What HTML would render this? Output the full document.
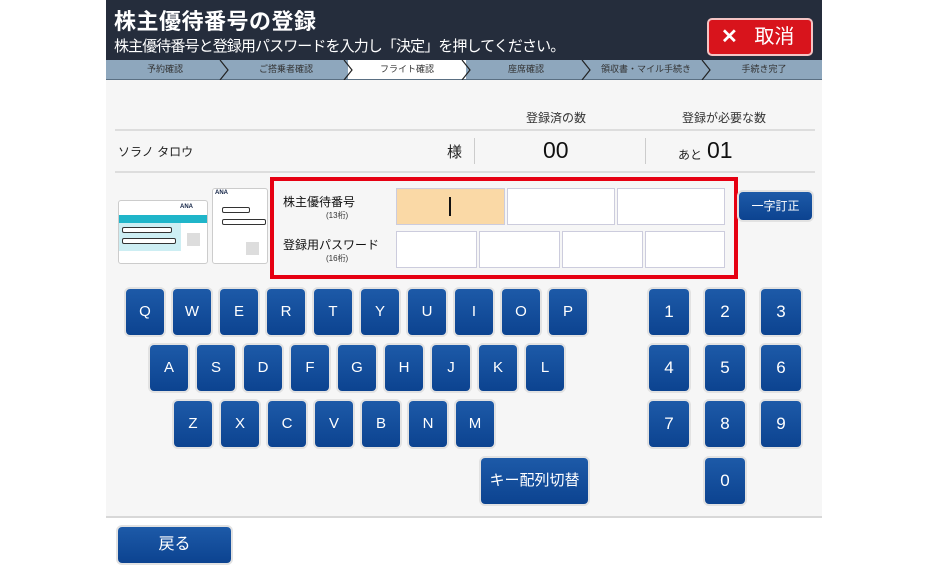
<!DOCTYPE html>
<html><head><meta charset="utf-8"><style>
*{margin:0;padding:0;box-sizing:border-box}
body{width:930px;height:575px;background:#fff;position:relative;overflow:hidden;font-family:"Liberation Sans","Noto Sans CJK JP",sans-serif}
.a{position:absolute}
#scr{left:106px;top:0;width:716px;height:575px;background:#f6f6f6}
#hdr{left:106px;top:0;width:716px;height:60px;background:#252d3c}
.t1{left:114px;top:4px;color:#fff;font-size:22px;font-weight:bold;letter-spacing:0.5px}
.t2{left:114px;top:35px;color:#fff;font-size:15px;letter-spacing:-0.9px}
#cx{left:707px;top:18px;width:106px;height:38px;background:#d8141c;border:2px solid #f4c4c4;border-radius:5px;color:#fff;font-size:20px;line-height:34px;padding-left:12px}
#prog{left:106px;top:60px;width:716px;height:20px;background:#8ea7bd;border-bottom:1px solid #5a6f82}
.st{position:absolute;top:0;height:19px;font-size:9px;color:#333;line-height:19px;text-align:center}
.k{position:absolute;width:38px;height:46px;background:linear-gradient(#1d5aa8,#0c4390);border-radius:4px;color:#fff;font-size:15px;text-align:center;line-height:46px;box-shadow:0 0 0 2px #e2e2e2}
.cell{position:absolute;height:37px;background:#fff;border:1px solid #ccd}
.ln{position:absolute;height:2px;background:#ddd;left:115px;width:700px}
</style></head><body>
<div class="a" id="scr"></div>
<div class="a" id="hdr"></div>
<div class="a t1">株主優待番号の登録</div>
<div class="a t2">株主優待番号と登録用パスワードを入力し「決定」を押してください。</div>
<div class="a" id="cx"><b style="font-size:20px">✕</b>&nbsp;&nbsp;&nbsp;取消</div>
<div class="a" id="prog">
<div class="st" style="left:0;width:118px">予約確認</div>
<div class="st" style="left:118px;width:124px">ご搭乗者確認</div>
<div class="st" style="left:242px;width:118px;background:#fff">フライト確認</div>
<div class="st" style="left:360px;width:120px">座席確認</div>
<div class="st" style="left:480px;width:120px">領収書・マイル手続き</div>
<div class="st" style="left:600px;width:116px">手続き完了</div>
<svg class="a" style="left:0;top:0" width="716" height="20"><g fill="none" stroke="#222" stroke-width="1.2"><path d="M114 0 L122 10 L114 20M238 0 L246 10 L238 20M356 0 L364 10 L356 20M476 0 L484 10 L476 20M596 0 L604 10 L596 20"/></g></svg>
</div>
<div class="a" style="left:526px;top:109px;font-size:12px;color:#333">登録済の数</div>
<div class="a" style="left:682px;top:109px;font-size:12px;color:#333">登録が必要な数</div>
<div class="ln" style="top:129px"></div>
<div class="a" style="left:118px;top:143px;font-size:12px;color:#222">ソラノ タロウ</div>
<div class="a" style="left:447px;top:141px;font-size:15px;color:#222">様</div>
<div class="a" style="left:474px;top:138px;width:1px;height:26px;background:#ccc"></div>
<div class="a" style="left:543px;top:137px;font-size:23px;color:#111">00</div>
<div class="a" style="left:645px;top:138px;width:1px;height:26px;background:#ccc"></div>
<div class="a" style="left:678px;top:146px;font-size:12px;color:#222">あと</div>
<div class="a" style="left:707px;top:137px;font-size:23px;color:#111">01</div>
<div class="ln" style="top:171px"></div>
<!-- cards -->
<div class="a" style="left:118px;top:200px;width:90px;height:64px;background:#fff;border:1px solid #ccc;border-radius:3px"></div>
<div class="a" style="left:119px;top:215px;width:88px;height:8px;background:#1fb5c9"></div>
<div class="a" style="left:119px;top:223px;width:62px;height:28px;background:#cdeef3"></div>
<div class="a" style="left:180px;top:204px;font-size:6px;font-weight:bold;color:#124">ANA</div>
<div class="a" style="left:122px;top:227px;width:50px;height:6px;border:1px solid #333;border-radius:2px;background:#fff"></div>
<div class="a" style="left:122px;top:238px;width:54px;height:6px;border:1px solid #333;border-radius:2px;background:#fff"></div>
<div class="a" style="left:187px;top:233px;width:13px;height:13px;background:#ddd"></div>
<div class="a" style="left:212px;top:188px;width:56px;height:76px;background:#fff;border:1px solid #ccc;border-radius:3px"></div>
<div class="a" style="left:215px;top:190px;font-size:6px;font-weight:bold;color:#124">ANA</div>
<div class="a" style="left:222px;top:207px;width:28px;height:6px;border:1px solid #333;border-radius:2px"></div>
<div class="a" style="left:222px;top:219px;width:44px;height:6px;border:1px solid #333;border-radius:2px"></div>
<div class="a" style="left:246px;top:242px;width:13px;height:13px;background:#ddd"></div>
<!-- red box -->
<div class="a" style="left:270px;top:177px;width:468px;height:102px;border:4px solid #e60012;background:#f6f6f6"></div>
<div class="a" style="left:283px;top:193px;font-size:12px;color:#111">株主優待番号</div>
<div class="a" style="left:326px;top:210px;font-size:8px;color:#333">(13桁)</div>
<div class="a" style="left:283px;top:236px;font-size:12px;color:#111">登録用パスワード</div>
<div class="a" style="left:326px;top:253px;font-size:8px;color:#333">(16桁)</div>
<div class="cell" style="left:396px;top:188px;width:109px;background:#fad9a6"></div>
<div class="a" style="left:449px;top:197px;width:2px;height:19px;background:#111"></div>
<div class="cell" style="left:507px;top:188px;width:108px"></div>
<div class="cell" style="left:617px;top:188px;width:108px"></div>
<div class="cell" style="left:396px;top:231px;width:81px"></div>
<div class="cell" style="left:479px;top:231px;width:81px"></div>
<div class="cell" style="left:562px;top:231px;width:81px"></div>
<div class="cell" style="left:645px;top:231px;width:80px"></div>
<div class="k" style="left:739px;top:192px;width:73px;height:28px;line-height:28px;font-size:12px">一字訂正</div>
<!-- keys -->
<div class="k" style="left:126px;top:289px">Q</div><div class="k" style="left:173px;top:289px">W</div><div class="k" style="left:220px;top:289px">E</div><div class="k" style="left:267px;top:289px">R</div><div class="k" style="left:314px;top:289px">T</div><div class="k" style="left:361px;top:289px">Y</div><div class="k" style="left:408px;top:289px">U</div><div class="k" style="left:455px;top:289px">I</div><div class="k" style="left:502px;top:289px">O</div><div class="k" style="left:549px;top:289px">P</div>
<div class="k" style="left:150px;top:345px">A</div><div class="k" style="left:197px;top:345px">S</div><div class="k" style="left:244px;top:345px">D</div><div class="k" style="left:291px;top:345px">F</div><div class="k" style="left:338px;top:345px">G</div><div class="k" style="left:385px;top:345px">H</div><div class="k" style="left:432px;top:345px">J</div><div class="k" style="left:479px;top:345px">K</div><div class="k" style="left:526px;top:345px">L</div>
<div class="k" style="left:174px;top:401px">Z</div><div class="k" style="left:221px;top:401px">X</div><div class="k" style="left:268px;top:401px">C</div><div class="k" style="left:315px;top:401px">V</div><div class="k" style="left:362px;top:401px">B</div><div class="k" style="left:409px;top:401px">N</div><div class="k" style="left:456px;top:401px">M</div>
<div class="k" style="left:481px;top:458px;width:107px;font-size:15px">キー配列切替</div>
<div class="k" style="left:649px;top:289px;width:40px;font-size:17px">1</div><div class="k" style="left:705px;top:289px;width:40px;font-size:17px">2</div><div class="k" style="left:761px;top:289px;width:40px;font-size:17px">3</div>
<div class="k" style="left:649px;top:345px;width:40px;font-size:17px">4</div><div class="k" style="left:705px;top:345px;width:40px;font-size:17px">5</div><div class="k" style="left:761px;top:345px;width:40px;font-size:17px">6</div>
<div class="k" style="left:649px;top:401px;width:40px;font-size:17px">7</div><div class="k" style="left:705px;top:401px;width:40px;font-size:17px">8</div><div class="k" style="left:761px;top:401px;width:40px;font-size:17px">9</div>
<div class="k" style="left:705px;top:458px;width:40px;font-size:17px">0</div>
<div class="a" style="left:106px;top:516px;width:716px;height:2px;background:#d8d8d8"></div>
<div class="a" style="left:106px;top:518px;width:716px;height:57px;background:#fff"></div>
<div class="k" style="left:118px;top:527px;width:113px;height:36px;line-height:36px;font-size:16px">戻る</div>
</body></html>
